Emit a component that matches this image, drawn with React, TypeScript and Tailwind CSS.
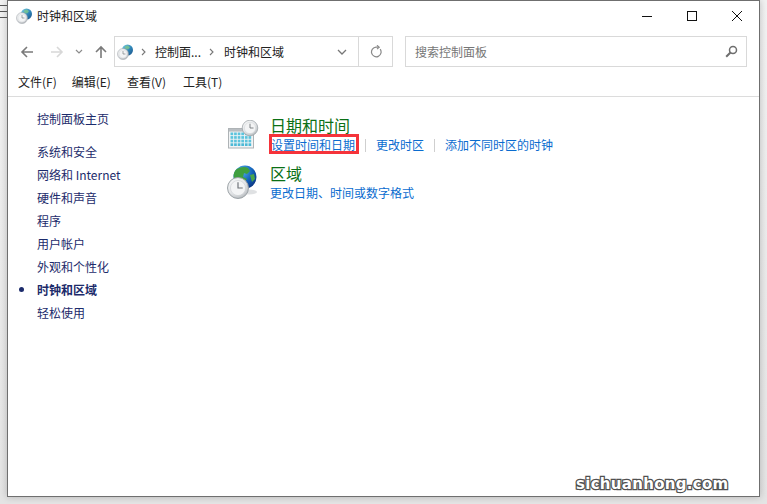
import React from "react";

const font = '"Noto Sans CJK SC","Liberation Sans",sans-serif';

function Clock({ cx, cy, r, id }: { cx: number; cy: number; r: number; id: string }) {
  return (
    <g>
      <defs>
        <radialGradient id={id} cx="40%" cy="35%" r="75%">
          <stop offset="0%" stopColor="#ffffff" />
          <stop offset="60%" stopColor="#e4e6e8" />
          <stop offset="100%" stopColor="#a4a9ae" />
        </radialGradient>
      </defs>
      <circle cx={cx} cy={cy} r={r} fill={`url(#${id})`} stroke="#9aa0a5" strokeWidth={r * 0.09} />
      <circle cx={cx} cy={cy} r={r * 0.72} fill="#f3f4f5" stroke="#c4c8cb" strokeWidth={r * 0.05} />
      <path
        d={`M${cx} ${cy - r * 0.55}V${cy}H${cx + r * 0.45}`}
        fill="none"
        stroke="#6c7176"
        strokeWidth={r * 0.11}
      />
    </g>
  );
}

function SmallIcon({ id }: { id: string }) {
  return (
    <svg width="17" height="16" viewBox="0 0 17 16" className="shrink-0">
      <defs>
        <linearGradient id={`${id}g`} x1="0" y1="0" x2="1" y2="1">
          <stop offset="0%" stopColor="#7fd0e0" />
          <stop offset="55%" stopColor="#2f86b8" />
          <stop offset="100%" stopColor="#1b4f86" />
        </linearGradient>
      </defs>
      <circle cx="10.5" cy="6" r="5.5" fill={`url(#${id}g)`} />
      <path d="M8 2.5l3-1 2 2-2 2-3-1z" fill="#7fc98a" opacity="0.75" />
      <Clock cx={6} cy={10} r={5.5} id={`${id}c`} />
    </svg>
  );
}

function CalendarIcon() {
  const cells: React.ReactNode[] = [];
  for (let r = 0; r < 4; r++) {
    for (let c = 0; c < 6; c++) {
      cells.push(
        <rect key={`${r}-${c}`} x={2.5 + c * 3.6} y={12.5 + r * 3.6} width="2.7" height="2.7" fill={r === 3 ? "#4db9d6" : "#5cc4dd"} />
      );
    }
  }
  return (
    <svg width="32" height="30" viewBox="0 0 32 30" className="block">
      <rect x="0.5" y="8.5" width="25" height="19.5" fill="#f2f4f5" stroke="#aeb3b6" />
      <rect x="1" y="9" width="24" height="2.6" fill="#b9bec2" />
      {cells}
      <Clock cx={22} cy={8} r={7.8} id="calClock" />
    </svg>
  );
}

function RegionIcon() {
  return (
    <svg width="33" height="36" viewBox="0 0 33 36" className="block">
      <defs>
        <radialGradient id="globe" cx="35%" cy="25%" r="85%">
          <stop offset="0%" stopColor="#58b4ea" />
          <stop offset="55%" stopColor="#1464bc" />
          <stop offset="100%" stopColor="#0b2f7a" />
        </radialGradient>
      </defs>
      <ellipse cx="24" cy="27" rx="8" ry="2.5" fill="#c9cdd0" opacity="0.6" />
      <circle cx="20" cy="12" r="11.5" fill="url(#globe)" />
      <path d="M12 4c3-2 8-3 11-1l2 3-3 3-3-1-1 4 4 2-3 4-5-4-5-1c-1-3 0-7 3-9z" fill="#3f9f3f" />
      <path d="M25 10l4-1 1 5-3 3z" fill="#4aa74a" />
      <Clock cx={13} cy={23} r={10.5} id="regClock" />
    </svg>
  );
}

const sideItems = ["系统和安全", "网络和 Internet", "硬件和声音", "程序", "用户帐户", "外观和个性化", "时钟和区域", "轻松使用"];

export default function App() {
  return (
    <div
      className="w-[767px] h-[504px] overflow-hidden relative bg-gradient-to-b from-[#f2f2f2] to-[#e4e4e4] text-[12px] leading-[16px] text-[#1a1a1a] pr-[7px] pl-[7px] pb-[7px]"
      style={{ fontFamily: font }}
    >
      {/* stray lines from the window behind */}
      <div className="absolute left-0 top-[5px] w-[7px] h-[13px] border-y border-[#555] flex items-center">
        <div className="w-full h-px bg-[#555]" />
      </div>

      <div className="w-[753px] h-[497px] bg-white border border-[#6f6f6f] shadow-[0_0_7px_rgba(0,0,0,0.22)] flex flex-col">
        {/* title bar */}
        <div className="h-[30px] shrink-0 flex items-center pl-[8px] pr-[9px] gap-[4px]">
          <SmallIcon id="t" />
          <span className="text-[#222]">时钟和区域</span>
          <div className="ml-auto flex items-center gap-[35px] pr-[8px]">
            <svg width="10" height="10" viewBox="0 0 10 10"><path d="M0 5.5h10" stroke="#111" strokeWidth="1" /></svg>
            <svg width="10" height="10" viewBox="0 0 10 10"><rect x="0.5" y="0.5" width="9" height="9" fill="none" stroke="#111" /></svg>
            <svg width="10" height="10" viewBox="0 0 10 10"><path d="M0 0l10 10M10 0L0 10" stroke="#111" strokeWidth="1" /></svg>
          </div>
        </div>

        {/* nav row */}
        <div className="h-[31px] mt-[5px] shrink-0 flex items-center pl-[12px]">
          <svg width="14" height="14" viewBox="0 0 14 14" className="shrink-0"><path d="M13 7H2M7 2L2 7l5 5" fill="none" stroke="#7a7a7a" strokeWidth="1.6" /></svg>
          <svg width="14" height="14" viewBox="0 0 14 14" className="shrink-0 ml-[16px]"><path d="M1 7h11M7 2l5 5-5 5" fill="none" stroke="#d8d8d8" strokeWidth="1.6" /></svg>
          <svg width="8" height="6" viewBox="0 0 8 6" className="shrink-0 ml-[11px]"><path d="M1 1l3 3 3-3" fill="none" stroke="#8c8c8c" strokeWidth="1.2" /></svg>
          <svg width="14" height="14" viewBox="0 0 14 14" className="shrink-0 ml-[11px]"><path d="M7 13V2M2 7l5-5 5 5" fill="none" stroke="#7a7a7a" strokeWidth="1.6" /></svg>
          <div className="ml-[6px] w-[279px] h-[31px] border border-[#d9d9d9] flex items-center">
            <div className="pl-[2px]"><SmallIcon id="a" /></div>
            <svg width="6" height="8" viewBox="0 0 6 8" className="ml-[7px]"><path d="M1 1l3 3-3 3" fill="none" stroke="#777" strokeWidth="1.1" /></svg>
            <span className="ml-[8px] text-[#222]">控制面...</span>
            <svg width="6" height="8" viewBox="0 0 6 8" className="ml-[8px]"><path d="M1 1l3 3-3 3" fill="none" stroke="#777" strokeWidth="1.1" /></svg>
            <span className="ml-[9px] text-[#222]">时钟和区域</span>
            <svg width="10" height="6" viewBox="0 0 10 6" className="ml-auto mr-[11px]"><path d="M1 1l4 4 4-4" fill="none" stroke="#777" strokeWidth="1.3" /></svg>
            <div className="w-[34px] h-full border-l border-[#d9d9d9] flex items-center justify-center">
              <svg width="12" height="13" viewBox="0 0 12 13">
                <path d="M10.2 4.2A4.8 4.8 0 1 1 6 2.2H8.5" fill="none" stroke="#8a8a8a" strokeWidth="1.2" />
                <path d="M7 0.3l2.2 1.9L7 4.1" fill="none" stroke="#8a8a8a" strokeWidth="1.2" />
              </svg>
            </div>
          </div>
          <div className="ml-[12px] w-[342px] h-[31px] border border-[#d9d9d9] flex items-center pl-[9px] pr-[8px] text-[#767676]">
            <span>搜索控制面板</span>
            <svg width="13" height="13" viewBox="0 0 13 13" className="ml-auto">
              <circle cx="8" cy="5" r="3.5" fill="none" stroke="#6e6e6e" strokeWidth="1.5" />
              <path d="M5.5 7.5L1.2 11.8" stroke="#6e6e6e" strokeWidth="2" />
            </svg>
          </div>
        </div>

        {/* menu bar */}
        <div className="h-[30px] shrink-0 flex items-center pl-[10px] border-b border-[#dcdcdc] text-[#222]">
          <span className="mr-[15px]">文件(F)</span>
          <span className="mr-[16px]">编辑(E)</span>
          <span className="mr-[17px]">查看(V)</span>
          <span>工具(T)</span>
        </div>

        {/* body */}
        <div className="flex-1 flex">
          <aside className="w-[200px] shrink-0 pt-[14px] pl-[29px] text-[#1c2b6b]">
            <div className="h-[16px] mb-[17px]">控制面板主页</div>
            <ul className="flex flex-col gap-[7px]">
              {sideItems.map((s) => {
                const active = s === "时钟和区域";
                return (
                  <li key={s} className={`h-[16px] relative whitespace-pre ${active ? "font-bold" : ""}`}>
                    {active && <span className="absolute left-[-18px] top-[5px] w-[5px] h-[5px] rounded-full bg-[#1c2b6b]" />}
                    {s}
                  </li>
                );
              })}
            </ul>
          </aside>

          <main className="flex-1 pl-[19px] pt-[17px]">
            <div className="flex h-[48px]">
              <div className="w-[44px] shrink-0 mt-[6px] -mr-[1px] ml-[1px]"><CalendarIcon /></div>
              <div>
                <div className="text-[16px] leading-[22px] text-[#0b7016] -ml-[1px]">日期和时间</div>
                <div className="flex items-center text-[#0a6ccf] mt-[1px] h-[16px]">
                  <span className="relative whitespace-nowrap">
                    设置时间和日期
                    <span className="absolute left-[-2px] top-[-3px] w-[90px] h-[20px] border-[3px] border-[#f5333a]" />
                  </span>
                  <span className="w-px h-[13px] bg-[#cfcfcf] ml-[10px] mr-[10px]" />
                  <span className="whitespace-nowrap">更改时区</span>
                  <span className="w-px h-[13px] bg-[#cfcfcf] ml-[10px] mr-[10px]" />
                  <span className="whitespace-nowrap">添加不同时区的时钟</span>
                </div>
              </div>
            </div>
            <div className="flex">
              <div className="w-[45px] shrink-0 -ml-[2px] mt-[3px]"><RegionIcon /></div>
              <div>
                <div className="text-[16px] leading-[22px] text-[#0b7016]">区域</div>
                <div className="text-[#0a6ccf] mt-[1px] whitespace-nowrap">更改日期、时间或数字格式</div>
              </div>
            </div>
          </main>
        </div>
      </div>

      {/* watermark */}
      <div
        className="absolute left-[576px] top-[474px] text-[15px] leading-[20px] font-bold text-white tracking-[0.3px] [-webkit-text-stroke:2.5px_#505050] [paint-order:stroke_fill]"
        style={{ fontFamily: '"DejaVu Sans",sans-serif' }}
      >
        sichuanhong.com
      </div>
    </div>
  );
}
